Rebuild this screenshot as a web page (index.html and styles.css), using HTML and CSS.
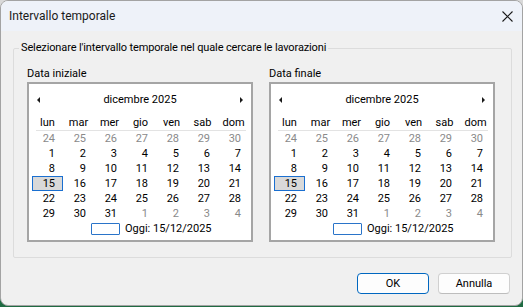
FILE: index.html
```html
<!DOCTYPE html>
<html lang="it">
<head>
<meta charset="utf-8">
<title>Intervallo temporale</title>
<link rel="stylesheet" href="styles.css">
</head>
<body>
<div class="window">
  <div class="titlebar">
    <span class="title">Intervallo temporale</span>
    <svg class="close" width="11" height="11" viewBox="0 0 11 11"><path d="M0.5 0.5 L10.5 10.5 M10.5 0.5 L0.5 10.5" stroke="#1b1b1b" stroke-width="1.1" fill="none"/></svg>
  </div>
  <div class="client">
    <fieldset class="group">
      <legend class="legend">Selezionare l'intervallo temporale nel quale cercare le lavorazioni</legend>
      <div class="pair">
        <div class="block">
          <div class="label">Data iniziale</div>
          <div class="cal">
            <div class="nav"><span class="arrow left"></span><span class="month">dicembre 2025</span><span class="arrow right"></span></div>
            <div class="grid head"><span>lun</span><span>mar</span><span>mer</span><span>gio</span><span>ven</span><span>sab</span><span>dom</span></div>
            <div class="grid days">
              <span class="o">24</span><span class="o">25</span><span class="o">26</span><span class="o">27</span><span class="o">28</span><span class="o">29</span><span class="o">30</span>
              <span>1</span><span>2</span><span>3</span><span>4</span><span>5</span><span>6</span><span>7</span>
              <span>8</span><span>9</span><span>10</span><span>11</span><span>12</span><span>13</span><span>14</span>
              <span class="sel">15</span><span>16</span><span>17</span><span>18</span><span>19</span><span>20</span><span>21</span>
              <span>22</span><span>23</span><span>24</span><span>25</span><span>26</span><span>27</span><span>28</span>
              <span>29</span><span>30</span><span>31</span><span class="o">1</span><span class="o">2</span><span class="o">3</span><span class="o">4</span>
            </div>
            <div class="today"><span class="today-box"></span><span>Oggi: 15/12/2025</span></div>
          </div>
        </div>
        <div class="block">
          <div class="label">Data finale</div>
          <div class="cal">
            <div class="nav"><span class="arrow left"></span><span class="month">dicembre 2025</span><span class="arrow right"></span></div>
            <div class="grid head"><span>lun</span><span>mar</span><span>mer</span><span>gio</span><span>ven</span><span>sab</span><span>dom</span></div>
            <div class="grid days">
              <span class="o">24</span><span class="o">25</span><span class="o">26</span><span class="o">27</span><span class="o">28</span><span class="o">29</span><span class="o">30</span>
              <span>1</span><span>2</span><span>3</span><span>4</span><span>5</span><span>6</span><span>7</span>
              <span>8</span><span>9</span><span>10</span><span>11</span><span>12</span><span>13</span><span>14</span>
              <span class="sel">15</span><span>16</span><span>17</span><span>18</span><span>19</span><span>20</span><span>21</span>
              <span>22</span><span>23</span><span>24</span><span>25</span><span>26</span><span>27</span><span>28</span>
              <span>29</span><span>30</span><span>31</span><span class="o">1</span><span class="o">2</span><span class="o">3</span><span class="o">4</span>
            </div>
            <div class="today"><span class="today-box"></span><span>Oggi: 15/12/2025</span></div>
          </div>
        </div>
      </div>
    </fieldset>
    <div class="buttons">
      <button class="btn primary">OK</button>
      <button class="btn">Annulla</button>
    </div>
  </div>
</div>
</body>
</html>
```
FILE: styles.css
```css
html, body {
  margin: 0;
  padding: 0;
}
body {
  width: 523px;
  height: 307px;
  overflow: hidden;
  background: linear-gradient(#d9d9d9 0, #d9d9d9 270px, #1f6b42 270px);
  font-family: Roboto, "Segoe UI", "Noto Sans", sans-serif;
  font-size: 11px;
  color: #000;
}
.window {
  box-sizing: border-box;
  width: 523px;
  height: 306px;
  border: 1px solid #a3a3a3;
  border-radius: 8px;
  overflow: hidden;
  background: #f0f0f0;
  display: flex;
  flex-direction: column;
}
.titlebar {
  height: 30px;
  flex: none;
  background: #eef2f9;
  display: flex;
  align-items: center;
  justify-content: space-between;
  padding: 0 9px 0 8px;
}
.title {
  font-size: 12px;
  color: #1a1a1a;
}
.close {
  display: block;
}
.client {
  flex: 1;
  display: flex;
  flex-direction: column;
  padding: 9px 10px 0 12px;
}
.group {
  margin: 0;
  border: 1px solid #dcdcdc;
  border-radius: 2px;
  padding: 10px 14px 15px 13px;
  min-width: 0;
}
.legend {
  padding: 0 2px;
  margin-left: -8px;
  line-height: 16px;
  letter-spacing: -0.13px;
}
.pair {
  display: flex;
  gap: 16px;
}
.block {
  display: flex;
  flex-direction: column;
}
.label {
  line-height: 16px;
}
.cal {
  box-sizing: border-box;
  width: 226px;
  height: 160px;
  border: 2px solid #a5a5a5;
  background: #fff;
  padding: 8px 2px 4px 3px;
  display: flex;
  flex-direction: column;
}
.nav {
  height: 15px;
  display: flex;
  align-items: center;
  justify-content: space-between;
  padding: 0 6px 0 5px;
  margin-bottom: 8px;
}
.month {
  line-height: 15px;
}
.arrow {
  width: 0;
  height: 0;
  border-top: 3.5px solid transparent;
  border-bottom: 3.5px solid transparent;
}
.arrow.left {
  border-right: 3.5px solid #1a1a1a;
}
.arrow.right {
  border-left: 3.5px solid #1a1a1a;
}
.grid {
  display: grid;
  grid-template-columns: repeat(7, 31px);
  grid-auto-rows: 15px;
  line-height: 15px;
}
.head {
  padding-bottom: 1px;
  background: linear-gradient(#e3e3e3, #e3e3e3) 4px 100% / 210px 1px no-repeat;
}
.head span {
  text-align: center;
}
.days span {
  box-sizing: border-box;
  text-align: right;
  padding-right: 8px;
}
.days .o {
  color: #8a8a8a;
}
.days .sel {
  border: 1px solid #1a6fd0;
  background: #d9d9d9;
  padding-right: 7px;
  line-height: 13px;
}
.today {
  height: 15px;
  display: flex;
  align-items: center;
  gap: 5px;
  padding-left: 59px;
  line-height: 15px;
}
.today-box {
  box-sizing: border-box;
  width: 29px;
  height: 12px;
  border: 1px solid #2a74c9;
  border-radius: 1px;
}
.buttons {
  display: flex;
  justify-content: flex-end;
  gap: 9px;
  margin-top: 15px;
  padding-right: 2px;
}
.btn {
  box-sizing: border-box;
  width: 72px;
  height: 21px;
  font-family: inherit;
  font-size: 11px;
  color: #000;
  background: #fdfdfd;
  border: 1px solid #d0d0d0;
  border-bottom-color: #bdbdbd;
  border-radius: 4px;
  padding: 0;
}
.btn.primary {
  border: 1px solid #0067c0;
}
```
